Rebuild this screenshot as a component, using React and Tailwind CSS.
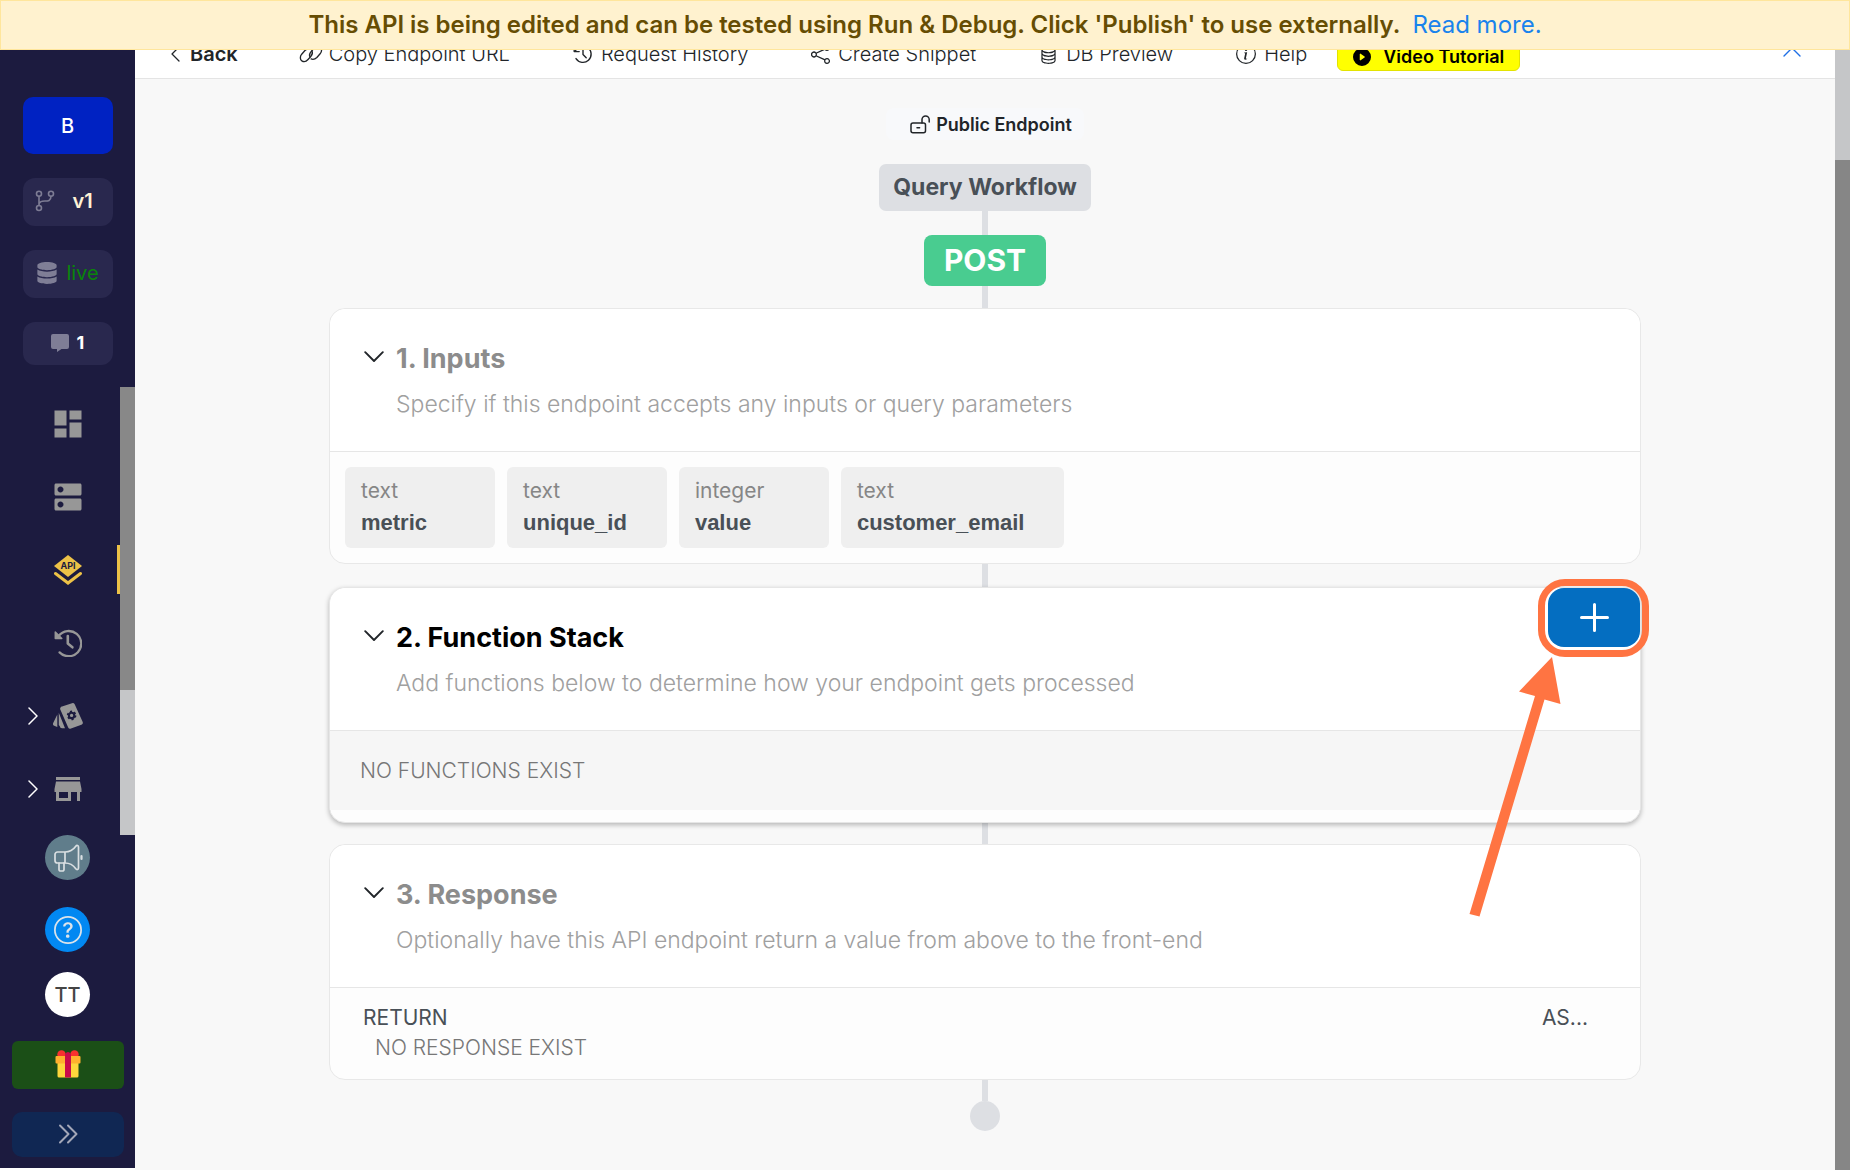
import React from "react";
import { MdDashboard, MdDns, MdStore } from "react-icons/md";
import { FaDatabase } from "react-icons/fa";
import { BsDatabase, BsInfoCircle, BsShare, BsPlayCircleFill, BsQuestionCircle } from "react-icons/bs";

const line = {
  fill: "none",
  stroke: "currentColor",
  strokeLinecap: "round",
  strokeLinejoin: "round",
};

function ChainIcon() {
  return (
    <svg width="24" height="22" viewBox="0 0 25 22" {...line} strokeWidth="1.4">
      <path d="M12 5.6C9.800 5 8 5.600 6.200 7.400L2.800 11.200C.8 13.600 1 16.800 3 18.200c2 1.300 4.600.6 6.400-1.400l3.200-3.600c1.400-1.800 1.800-3.600.8-5.400" />
      <path d="M12.600 16.200c2.200.8 4.200.2 6-1.600l3.400-3.800c2-2.400 2-5.400 0-6.900-2-1.400-4.600-.8-6.400 1.200l-3.200 3.700c-1.500 1.700-1.900 3.500-.9 5.300" />
    </svg>
  );
}

function ClockBackIcon() {
  return (
    <svg width="20" height="20" viewBox="0 0 20 20" {...line} strokeWidth="1.4">
      <path d="M2.6 6.500A8.200 8.200 0 1 1 3 14.600" />
      <path d="M1.200 7.600h5M1.200 7.600V3M10 5.500v5l3.200 3.200" />
    </svg>
  );
}

function UnlockIcon() {
  return (
    <svg width="20" height="19" viewBox="0 0 20 19" {...line} strokeWidth="1.5">
      <rect x="1" y="8" width="14.5" height="9.8" rx="2" />
      <path d="M12 8V4.600a3.600 3.600 0 0 1 7.200 0V7M7 12.800h2.600" />
    </svg>
  );
}

function ChevronDown() {
  return (
    <svg width="20" height="12" viewBox="0 0 20 12" {...line} strokeWidth="1.9">
      <path d="M1.200 1.200 10 10l8.800-8.800" />
    </svg>
  );
}

function ChevronRight() {
  return (
    <svg width="10" height="18" viewBox="0 0 10 18" {...line} strokeWidth="1.5">
      <path d="m1 1 8 8-8 8" />
    </svg>
  );
}

function BranchIcon() {
  return (
    <svg width="20" height="22" viewBox="0 0 20 22" {...line} strokeWidth="1.6">
      <circle cx="4" cy="3.8" r="2.5" />
      <circle cx="16" cy="3.8" r="2.5" />
      <circle cx="4" cy="18" r="2.5" />
      <path d="M4 6.300v9.200M16 6.300c0 6-5 4.400-8.500 4.900C5 11.600 4 13 4 15" />
    </svg>
  );
}

function CommentIcon() {
  return (
    <svg width="18" height="18" viewBox="0 0 18 18" fill="currentColor">
      <path d="M2 0h14a2 2 0 0 1 2 2v11a2 2 0 0 1-2 2h-5.500L6 18v-3H2a2 2 0 0 1-2-2V2a2 2 0 0 1 2-2z" />
    </svg>
  );
}

function ApiIcon() {
  return (
    <svg width="28" height="30" viewBox="0 0 28 30">
      <path d="M14 0 28 11 14 22 0 11z" fill="#edc247" />
      <path d="m1.500 18.500 12.500 9.500 12.500-9.500" fill="none" stroke="#edc247" strokeWidth="3" strokeLinecap="round" />
      <text x="14" y="14.200" textAnchor="middle" fontSize="9" fontWeight="700" fontFamily="Inter" fill="#1c1b3f">
        API
      </text>
    </svg>
  );
}

function HistoryIcon() {
  return (
    <svg width="28" height="28" viewBox="0 0 28 28" {...line} strokeWidth="2.3">
      <path d="M4.600 7A12.600 12.600 0 1 1 5.600 23.400" />
      <path d="M13.800 7v7.500l4.600 3.800" strokeWidth="2.6" />
      <path d="M1.300 3v6.500h6.500z" fill="currentColor" strokeWidth="1.5" />
    </svg>
  );
}

function CardsIcon() {
  return (
    <svg width="30" height="26" viewBox="0 0 30 26" fill="currentColor" className="shrink-0">
      <path d="M9 3.600 19 .2a2.200 2.200 0 0 1 2.800 1.200l7.800 17.400a2.200 2.200 0 0 1-1.200 2.900L18 25.600a2.200 2.200 0 0 1-2.800-1.200L7.300 6.600A2.200 2.200 0 0 1 9 3.600z" />
      <path d="M5.800 9.800 12 25.200H9a2.200 2.200 0 0 1-2.200-2L5.800 22z M4.300 11.500V24L1.200 22.800A2.200 2.200 0 0 1 .2 20z" />
      <circle cx="18.600" cy="12.400" r="4" fill="none" stroke="#1c1b3f" strokeWidth="1.6" strokeDasharray="2.09" />
      <circle cx="18.600" cy="12.400" r="2.700" fill="none" stroke="#1c1b3f" strokeWidth="2.1" />
    </svg>
  );
}

function MegaphoneIcon() {
  return (
    <svg width="30" height="30" viewBox="0 0 30 30" {...line} strokeWidth="1.7">
      <path d="M12 9H4.500A2.500 2.500 0 0 0 2 11.500v6A2.500 2.500 0 0 0 4.500 20H12zM12 9c5 0 8.500-2.500 10.800-5.800.9-1.200 2.700-.9 2.700.7v21.200c0 1.600-1.800 1.900-2.700.7C20.500 22.500 17 20 12 20" />
      <path d="M6 20v6.500a1.500 1.500 0 0 0 1.500 1.500h2a1.500 1.500 0 0 0 1.500-1.500V20" />
      <path d="M28.500 13v3" strokeWidth="2.2" />
    </svg>
  );
}

function GiftIcon() {
  return (
    <svg width="26" height="28" viewBox="0 0 26 28">
      <rect x="2.5" y="9" width="21" height="18.5" rx="1.5" fill="#fdd63c" />
      <circle cx="6.5" cy="4.5" r="4.2" fill="#f8312f" />
      <circle cx="19.5" cy="4.5" r="4.2" fill="#f8312f" />
      <rect x="0.5" y="6" width="25" height="7.5" rx="1" fill="#ffb02e" />
      <path d="M10 4q3-4 6 0v23.500h-6z" fill="#ca0b4a" />
    </svg>
  );
}

const navItems = [
  { name: "Dashboard", icon: <MdDashboard size={36} /> },
  { name: "Database", icon: <MdDns size={36} /> },
  { name: "API", icon: <ApiIcon />, active: true },
  { name: "History", icon: <HistoryIcon /> },
  { name: "Library", icon: <CardsIcon />, expandable: true },
  { name: "Marketplace", icon: <MdStore size={36} />, expandable: true },
];

function Sidebar() {
  return (
    <aside className="flex w-[135px] shrink-0 flex-col items-center self-start bg-[#1c1b3f] pt-[47px] pb-[11px]">
      <button className="h-[57px] w-[90px] rounded-[10px] bg-[#0022c2] text-xl font-medium text-white">B</button>
      <button className="mt-6 flex h-12 w-[90px] items-center gap-[18px] rounded-xl bg-[#29284e] pb-0.5 pl-3 text-xl font-semibold text-[#fff3d6]">
        <span className="text-[#7d7c94]"><BranchIcon /></span>
        v1
      </button>
      <button className="mt-6 flex h-12 w-[90px] items-center justify-center gap-2 rounded-xl bg-[#29284e] pb-0.5 text-xl text-[#0a850a]">
        <FaDatabase size={22} className="text-[#7f7e96]" />
        live
      </button>
      <button className="mt-6 flex h-[43px] w-[90px] items-center justify-center gap-2 rounded-xl bg-[#29284e] pb-0.5 text-lg font-bold text-white">
        <span className="text-[#7f7e96]"><CommentIcon /></span>
        1
      </button>
      <nav className="mt-[22px] flex h-[448px] w-full">
        <ul className="flex flex-1 flex-col gap-6 pt-3">
          {navItems.map((item) => (
            <li key={item.name}>
              <a
                href="#"
                aria-label={item.name}
                className={
                  item.active
                    ? "flex h-[49px] items-center border-r-[3px] border-[#edc247]"
                    : "flex h-[49px] items-center text-[#979797]"
                }
              >
                <span className="w-[50px] pl-7 text-white">{item.expandable && <ChevronRight />}</span>
                <span className="flex w-9 justify-center">{item.icon}</span>
              </a>
            </li>
          ))}
        </ul>
        <div className="w-[15px] bg-[#c5c6c8]">
          <div className="h-[303px] bg-[#888888]" />
        </div>
      </nav>
      <button aria-label="Announcements" className="flex size-[45px] items-center justify-center rounded-full bg-[#607d8b] text-[#d9dfe2]">
        <MegaphoneIcon />
      </button>
      <button aria-label="Help center" className="mt-[27px] flex size-[45px] items-center justify-center rounded-full bg-[#0288f2] text-[#dbe3ea]">
        <BsQuestionCircle size={28} />
      </button>
      <button className="mt-5 size-[45px] rounded-full bg-white text-xl font-medium text-[#444]">TT</button>
      <button aria-label="Rewards" className="mt-6 flex h-12 w-28 items-center justify-center rounded-md bg-[#1b4f17] pb-0.5">
        <GiftIcon />
      </button>
      <button aria-label="Expand sidebar" className="mt-[23px] flex h-[45px] w-28 items-center justify-center rounded-[10px] bg-[#102753] pb-0.5 text-[#a3a7b8]">
        <svg width="20" height="20" viewBox="0 0 20 20" {...line} strokeWidth="2">
          <path d="m2 1.500 8.500 8.500L2 18.500M10 1.500l8.500 8.500-8.500 8.500" />
        </svg>
      </button>
    </aside>
  );
}

function Toolbar() {
  return (
    <header className="-mt-5 flex h-[49px] items-center border-b border-[#e4e4e4] bg-white pl-9 text-xl font-light text-[#212529]">
      <button className="flex items-center gap-2.5 font-semibold">
        <svg width="9" height="16" viewBox="0 0 9 16" {...line} strokeWidth="1.3">
          <path d="M8 1 1 8l7 7" />
        </svg>
        Back
      </button>
      <div className="ml-[61px] flex items-center gap-[63px]">
        <button className="flex items-center gap-1.5"><ChainIcon />Copy Endpoint URL</button>
        <button className="flex items-center gap-2"><ClockBackIcon />Request History</button>
        <button className="flex items-center gap-2"><BsShare size={19} />Create Snippet</button>
        <button className="flex items-center gap-2"><BsDatabase size={19} />DB Preview</button>
        <button className="flex items-center gap-2"><BsInfoCircle size={20} />Help</button>
      </div>
      <button className="mt-1 ml-[30px] flex h-[30px] items-center gap-3 rounded-md border border-[#e3e300] bg-[#ffff00] px-[15px] pt-0.5 text-lg font-semibold text-black">
        <BsPlayCircleFill size={18} />
        Video Tutorial
      </button>
      <button aria-label="Collapse toolbar" className="mr-[34px] mb-1 ml-auto text-[#1f6fe5]">
        <svg width="18" height="10" viewBox="0 0 18 10" {...line} strokeWidth="1.4">
          <path d="m1 9 8-8 8 8" />
        </svg>
      </button>
    </header>
  );
}

function StepCard({ title, description, active, children, overlay }) {
  return (
    <section
      className={
        active
          ? "relative z-10 w-full rounded-2xl border border-[#e6e6e6] bg-[#fdfdfd] shadow-[0_2px_5px_rgba(0,0,0,0.27)]"
          : "w-full rounded-2xl border border-[#e8e8e8] bg-[#fdfdfd]"
      }
    >
      <div className="flex h-[143px] items-start rounded-t-2xl border-b border-[#e6e6e6] bg-white pt-[34px] pl-[34px]">
        <button aria-label={"Toggle " + title} className="mt-2 w-8 text-[#212529]">
          <ChevronDown />
        </button>
        <div>
          <h2 className={active ? "text-[27px] leading-8 font-bold text-black" : "text-[27px] leading-8 font-bold text-[#8c8c8c]"}>{title}</h2>
          <p className="mt-[13px] text-[23px] leading-8 font-light text-[#a0a0a0]">{description}</p>
        </div>
      </div>
      {children}
      {overlay}
    </section>
  );
}

const inputs = [
  ["text", "metric"],
  ["text", "unique_id"],
  ["integer", "value"],
  ["text", "customer_email"],
];

function AddFunction() {
  return (
    <>
      <button aria-label="Add function" className="absolute top-0 right-0 flex h-[59px] w-[92px] items-center justify-center rounded-2xl bg-[#046ec1]">
        <svg width="29" height="29" viewBox="0 0 29 29" fill="none" stroke="white" strokeWidth="3" strokeLinecap="round">
          <path d="M14.500 1.500v26M1.500 14.500h26" />
        </svg>
      </button>
      <div className="pointer-events-none absolute -top-[9px] -right-[9px] h-[78px] w-[111px] rounded-[27px] border-[7px] border-[#ff7442]" />
      <svg className="pointer-events-none absolute top-[68px] right-[70px]" width="105" height="265" viewBox="0 0 105 265" fill="#ff7442">
        <path d="M87 1 95.500 48 79.500 43.500 14.500 260.500 4.500 258 70 40 54 35.500z" />
      </svg>
    </>
  );
}

export default function App() {
  return (
    <div className="flex min-h-screen flex-col bg-white font-['Inter',sans-serif]">
      <div className="relative z-20 flex h-[50px] items-center justify-center gap-3 border border-[#ffe69c] bg-[#fff2cf] text-2xl font-semibold text-[#664d03]">
        <p>This API is being edited and can be tested using Run &amp; Debug. Click 'Publish' to use externally.</p>
        <a href="#" className="font-normal text-[#1a83ec]">Read more.</a>
      </div>
      <div className="flex flex-1">
        <Sidebar />
        <div className="flex min-w-0 flex-1 flex-col bg-[#f8f8f8]">
          <Toolbar />
          <main className="mx-auto flex w-full max-w-[1312px] flex-col items-center pt-[29px]">
            <button className="flex h-8 items-center gap-1.5 rounded-lg bg-[#f8f9fb] pt-0.5 pr-3 pl-6 text-lg font-semibold text-[#212529]">
              <span className="pb-0.5"><UnlockIcon /></span>
              Public Endpoint
            </button>
            <button className="mt-6 h-[47px] rounded-[7px] bg-[#dddfe3] px-3.5 text-[23px] font-bold text-[#495057]">Query Workflow</button>
            <div className="h-6 w-1.5 bg-[#dddfe3]" />
            <button className="h-[51px] rounded-lg bg-[#49cc90] px-5 pb-0.5 text-[30px] leading-none font-bold text-white">POST</button>
            <div className="h-[22px] w-1.5 bg-[#dddfe3]" />

            <StepCard title="1. Inputs" description="Specify if this endpoint accepts any inputs or query parameters">
              <div className="flex gap-3 p-[15px]">
                {inputs.map(([type, name]) => (
                  <button key={name} className="min-w-[150px] rounded-md bg-[#efefef] pt-2 pr-10 pb-[9px] pl-4 text-left leading-8">
                    <span className="block text-[21px] text-[#868686]">{type}</span>
                    <span className="block font-['Liberation_Sans',sans-serif] text-[22px] font-bold text-[#495057]">{name}</span>
                  </button>
                ))}
              </div>
            </StepCard>
            <div className="h-[23px] w-1.5 bg-[#dddfe3]" />

            <StepCard
              active
              title="2. Function Stack"
              description="Add functions below to determine how your endpoint gets processed"
              overlay={<AddFunction />}
            >
              <p className="mb-3 bg-[#f6f6f6] py-6 pl-[30px] text-[21px] leading-[31px] font-light text-[#777]">NO FUNCTIONS EXIST</p>
            </StepCard>
            <div className="h-[21px] w-1.5 bg-[#dddfe3]" />

            <StepCard title="3. Response" description="Optionally have this API endpoint return a value from above to the front-end">
              <div className="pt-[15px] pr-[52px] pb-4 pl-[33px] text-[21px] leading-[30px] text-[#495057]">
                <div className="flex justify-between">
                  <span>RETURN</span>
                  <span>AS...</span>
                </div>
                <p className="pl-3 font-light text-[#777]">NO RESPONSE EXIST</p>
              </div>
            </StepCard>
            <div className="h-[21px] w-1.5 bg-[#dddfe3]" />
            <div className="size-[30px] rounded-full bg-[#dddfe3]" />
          </main>
        </div>
        <div className="w-[15px] shrink-0 bg-[#868686]">
          <div className="h-[110px] bg-[#c5c6c8]" />
        </div>
      </div>
    </div>
  );
}
